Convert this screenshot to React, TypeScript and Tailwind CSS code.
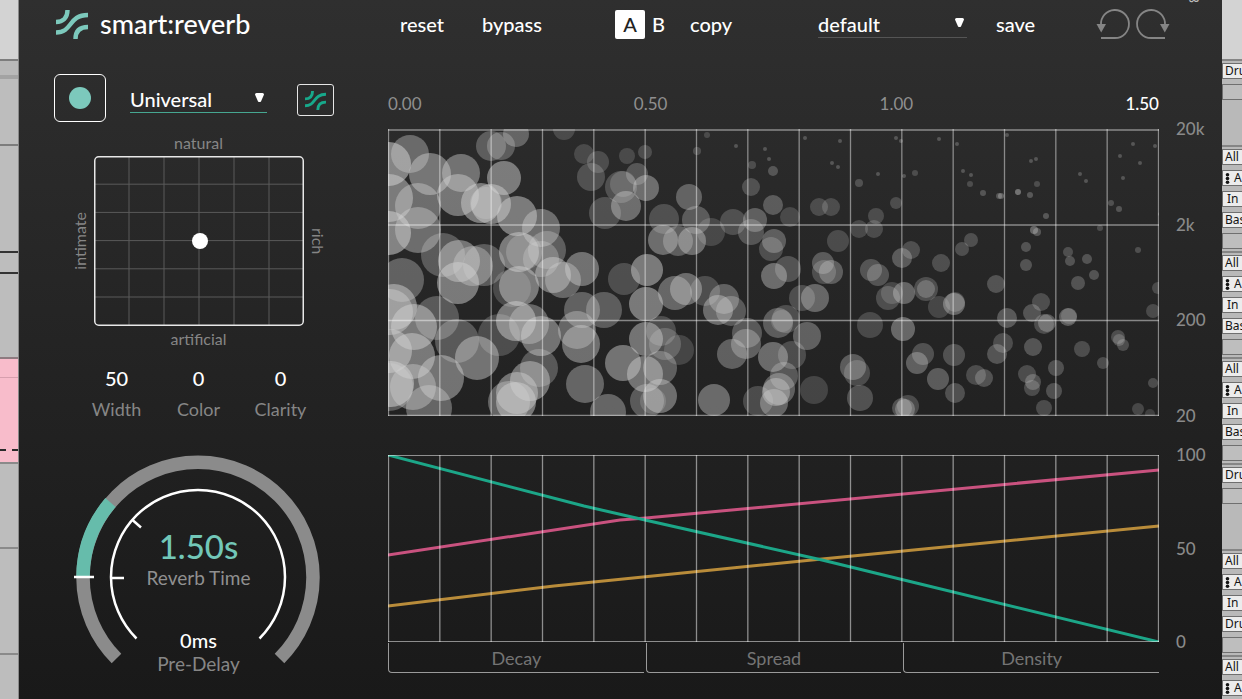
import { ReactNode, useState } from "react";

// x, y, radius, opacity in percent
const bubbles = [
  [0, 35, 22, 50], [21, 25, 19, 35], [41, 45, 21, 42], [72, 44, 19, 40], [0, 69, 24, 45],
  [29, 77, 23, 38], [0, 104, 22, 50], [29, 101, 23, 38], [69, 66, 21, 42], [102, 17, 15, 28],
  [112, 17, 14, 28], [127, 5, 13, 32], [115, 49, 17, 45], [92, 74, 20, 45], [97, 74, 16, 25],
  [102, 75, 20, 45], [128, 87, 20, 45], [152, 99, 19, 38], [130, 123, 20, 45], [135, 123, 18, 25],
  [158, 121, 19, 30], [152, 130, 18, 30], [54, 126, 22, 28], [70, 132, 21, 42], [95, 136, 21, 28],
  [84, 137, 20, 35], [69, 154, 21, 45], [164, 146, 18, 42], [174, 151, 18, 35], [193, 140, 17, 40],
  [13, 151, 22, 32], [130, 157, 20, 45], [123, 159, 19, 20], [235, 150, 16, 22], [258, 141, 16, 45],
  [193, 181, 18, 32], [215, 181, 18, 30], [257, 175, 17, 45], [5, 178, 23, 45], [1, 183, 23, 40],
  [25, 198, 23, 45], [48, 189, 22, 28], [68, 212, 22, 28], [110, 206, 21, 22], [127, 192, 20, 45],
  [140, 195, 20, 35], [152, 207, 20, 42], [188, 201, 19, 35], [192, 215, 19, 40], [1, 222, 22, 45],
  [23, 227, 23, 45], [88, 229, 22, 42], [234, 234, 18, 42], [257, 210, 17, 42], [256, 245, 18, 42],
  [52, 249, 23, 42], [24, 258, 23, 38], [2, 255, 23, 50], [0, 258, 24, 30], [40, 279, 23, 35],
  [150, 239, 19, 28], [141, 252, 20, 42], [128, 264, 21, 42], [127, 273, 20, 45], [120, 273, 21, 35],
  [196, 255, 19, 35], [219, 283, 18, 35], [258, 272, 17, 30], [175, 0, 11, 18], [195, 25, 10, 18],
  [209, 33, 11, 20], [202, 48, 14, 22], [238, 27, 8, 18], [232, 58, 16, 22], [234, 55, 13, 20],
  [248, 45, 11, 25], [237, 77, 15, 38], [216, 84, 16, 22], [257, 59, 13, 38], [256, 23, 7, 20],
  [300, 68, 13, 32], [308, 22, 4, 20], [318, 6, 3, 18], [347, 17, 2, 24], [376, 20, 2, 24],
  [380, 30, 2, 24], [363, 36, 4, 20], [384, 42, 5, 24], [362, 58, 9, 22], [384, 76, 10, 28],
  [275, 90, 15, 22], [307, 91, 14, 28], [322, 103, 14, 18], [344, 93, 13, 22], [366, 91, 12, 30],
  [362, 103, 13, 25], [401, 88, 10, 18], [274, 111, 15, 38], [289, 112, 15, 30], [303, 112, 14, 38],
  [385, 112, 12, 30], [382, 120, 12, 22], [399, 140, 13, 24], [385, 147, 13, 38], [430, 78, 9, 20],
  [442, 78, 9, 20], [449, 112, 11, 20], [434, 134, 11, 28], [435, 143, 12, 22], [442, 143, 12, 30],
  [482, 141, 11, 25], [489, 146, 11, 25], [470, 100, 9, 18], [485, 100, 9, 20], [487, 87, 8, 20],
  [470, 54, 4, 22], [507, 74, 6, 20], [286, 164, 17, 35], [297, 160, 16, 38], [316, 162, 15, 22],
  [335, 170, 15, 32], [329, 181, 15, 38], [342, 182, 15, 28], [413, 169, 13, 22], [426, 169, 14, 35],
  [389, 194, 15, 30], [393, 192, 11, 18], [397, 190, 14, 22], [358, 204, 15, 28], [418, 207, 14, 32],
  [357, 215, 15, 32], [343, 225, 15, 32], [384, 228, 15, 38], [403, 226, 14, 22], [395, 247, 14, 28],
  [390, 260, 16, 32], [387, 263, 14, 38], [385, 274, 14, 35], [369, 272, 15, 22], [425, 261, 14, 18],
  [325, 271, 16, 38], [464, 238, 13, 30], [468, 244, 13, 22], [471, 269, 13, 25], [481, 196, 13, 20],
  [499, 169, 12, 22], [290, 221, 15, 18], [272, 202, 15, 22], [276, 215, 16, 22], [271, 239, 17, 32],
  [271, 267, 17, 40], [264, 272, 13, 20], [416, 9, 2, 24], [451, 12, 2, 24], [443, 34, 2, 24],
  [449, 38, 2, 24], [489, 45, 2, 24], [507, 9, 2, 24], [512, 12, 2, 24], [550, 10, 2, 24],
  [568, 15, 2, 24], [618, 6, 2, 24], [515, 47, 2, 24], [526, 44, 3, 20], [574, 42, 2, 24],
  [582, 46, 2, 24], [581, 55, 3, 20], [594, 64, 3, 24], [610, 67, 3, 24], [612, 67, 3, 30],
  [642, 32, 2, 24], [647, 30, 2, 24], [648, 55, 3, 20], [629, 63, 3, 40], [641, 66, 3, 26],
  [657, 87, 3, 26], [691, 45, 2, 24], [697, 52, 2, 24], [731, 27, 2, 24], [744, 15, 2, 24],
  [766, 17, 2, 24], [751, 34, 2, 24], [734, 49, 2, 24], [722, 74, 3, 22], [730, 80, 3, 24],
  [771, 85, 2, 24], [711, 99, 3, 20], [645, 101, 4, 34], [648, 103, 4, 26], [582, 111, 7, 22],
  [573, 120, 7, 22], [522, 121, 9, 22], [513, 129, 10, 28], [552, 134, 9, 22], [637, 118, 5, 24],
  [637, 136, 6, 24], [679, 123, 5, 22], [681, 132, 5, 24], [698, 130, 5, 24], [705, 146, 5, 24],
  [689, 154, 7, 24], [749, 121, 3, 22], [607, 155, 9, 24], [769, 159, 6, 20], [764, 182, 7, 20],
  [515, 164, 11, 34], [503, 164, 11, 18], [537, 160, 12, 22], [537, 160, 9, 25], [550, 178, 11, 18],
  [565, 175, 11, 34], [566, 173, 10, 22], [618, 189, 10, 28], [652, 173, 9, 22], [643, 184, 9, 25],
  [655, 195, 10, 22], [658, 194, 9, 28], [679, 188, 9, 30], [680, 187, 8, 18], [514, 200, 12, 36],
  [614, 214, 10, 22], [608, 225, 10, 26], [644, 218, 9, 26], [565, 226, 11, 24], [534, 225, 11, 24],
  [528, 234, 11, 32], [549, 250, 11, 30], [587, 246, 10, 22], [595, 249, 9, 25], [566, 264, 10, 24],
  [638, 245, 9, 22], [644, 253, 8, 25], [643, 259, 8, 22], [665, 262, 8, 24], [667, 239, 8, 24],
  [655, 279, 8, 22], [693, 220, 8, 22], [714, 234, 6, 22], [729, 208, 7, 22], [730, 211, 6, 22],
  [734, 216, 6, 22], [764, 254, 5, 22], [749, 280, 6, 20], [761, 285, 5, 16], [516, 280, 10, 30],
  [519, 277, 11, 22], [513, 279, 10, 25],
];

const columns = Array.from({ length: 16 }, (_, i) => 0.5 + (i * 770) / 15);

const curves = [
  { color: "#c9527f", points: "0,100 232,65 258,63 771,15" },
  { color: "#b98c3a", points: "0,151 166,131 434,104 771,71" },
  { color: "#1ca688", points: "0,0 196,51 257,65 434,105 520,126 771,187" },
];

const tracks = [
  { height: "h-[86px]", cells: ["Dru", ""] },
  { height: "h-[106px]", cells: ["All", "A", "In", "Bas", ""] },
  { height: "h-[106px]", cells: ["All", "A", "In", "Bas", ""] },
  { height: "h-[106px]", cells: ["All", "A", "In", "Bas", ""] },
  { height: "h-[86px]", cells: ["Dru", ""] },
  { height: "h-[106px]", cells: ["All", "A", "In", "Dru", ""] },
  { height: "h-[106px]", cells: ["All", "A", "In", "Bas", ""] },
];

function Waves({ className }: { className: string }) {
  return (
    <svg viewBox="0 0 32 29" fill="none" stroke="currentColor" strokeWidth="4.4" className={className}>
      <path d="M0 12C7 12 11.5 8 11.5 0" />
      <path d="M0 22.5C17 22.5 12 5 32 5" />
      <path d="M19.5 29C19.5 21 24 17 32 17" />
    </svg>
  );
}

function Turn({ className }: { className?: string }) {
  return (
    <svg viewBox="0 0 36 32" className={`h-8 w-9 ${className ?? ""}`}>
      <path d="M5 17A14 14 0 1 1 19 30H5" fill="none" stroke="#858585" strokeWidth="1.8" />
      <path d="M0.5 16H10L5.2 24.5Z" fill="#858585" />
    </svg>
  );
}

function Picker({ label, value, className }: { label: string; value: string; className: string }) {
  return (
    <div className={`relative border-b ${className}`}>
      <select
        aria-label={label}
        defaultValue={value}
        className="block h-[27px] w-full appearance-none bg-transparent text-[20px] leading-6 outline-none"
      >
        <option>{value}</option>
      </select>
      <svg viewBox="0 0 9 9" className="pointer-events-none absolute top-2 right-[3px] size-[9px]">
        <path d="M0 1.5Q0 0 1.5 0H7.5Q9 0 9 1.5L6 8.5Q4.5 9.5 3 8.5Z" fill="#fff" />
      </svg>
    </div>
  );
}

function Axis({ labels }: { labels: string[] }) {
  return (
    <div className="-my-2.5 ml-[17px] flex w-[46px] flex-col justify-between text-[17px] leading-5 font-medium text-[#8a8a8a]">
      {labels.map(label => <span key={label}>{label}</span>)}
    </div>
  );
}

function Param({ label, children }: { label: string; children: ReactNode }) {
  return (
    <div className="flex w-[82px] flex-col items-center gap-[7px] leading-6">
      <span className="text-[20px] font-medium">{children}</span>
      <span className="text-[18px] text-[#868686]">{label}</span>
    </div>
  );
}

function Arrangement() {
  return (
    <aside className="flex w-[19px] shrink-0 flex-col border-r border-[#8a8a8a] bg-[#bdbdbd]">
      <div className="h-[59px] bg-[#d3d3d3]" />
      <div className="h-[16px] border-t-2 border-[#7d7d7d] bg-[#b9b9b9]" />
      <div className="h-[69px] border-t-4 border-[#a3a3a3]" />
      <div className="h-[107px] border-t-2 border-[#7d7d7d]" />
      <div className="h-[21px] border-t-2 border-[#333]" />
      <div className="h-[85px] border-t-2 border-[#333]" />
      <div className="h-[20px] border-t-2 border-[#8d7b80] bg-[#f8bccb]" />
      <div className="h-[85px] border-t border-[#d79fae] bg-[#f8bccb] pt-[71px]">
        <div className="border-t-2 border-dashed border-[#2a2a2a]" />
      </div>
      <div className="h-[85px] border-t-2 border-[#8a8a8a]" />
      <div className="h-[106px] border-t-2 border-[#8a8a8a]" />
      <div className="flex-1 border-t-2 border-[#8a8a8a]" />
    </aside>
  );
}

function TrackList() {
  return (
    <aside className="w-5 shrink-0 overflow-hidden bg-[#b9b9b9] font-['Noto_Sans',sans-serif] text-[12px] leading-[14px] text-[#141414]">
      <div className="h-[59px] bg-[#d3d3d3]" />
      {tracks.map((track, i) => (
        <div key={i} className={`flex flex-col gap-[5px] border-t-2 border-[#858585] pt-0.5 ${track.height}`}>
          {track.cells.map((cell, j) => (
            <div
              key={j}
              className={`flex h-4 w-12 shrink-0 items-center border border-[#6f6f6f] ${cell ? "bg-[#ececec]" : "bg-[#bebebe]"} ${cell === "In" ? "pl-1" : "pl-0.5"}`}
            >
              {cell === "A" && (
                <svg viewBox="0 0 5 11" className="mr-1 h-[11px] w-[5px]">
                  <g fill="#141414">
                    <circle cx="2.5" cy="1.8" r="1.8" />
                    <circle cx="2.5" cy="5.5" r="1.8" />
                    <circle cx="2.5" cy="9.2" r="1.8" />
                  </g>
                </svg>
              )}
              {cell}
            </div>
          ))}
        </div>
      ))}
    </aside>
  );
}

function Header() {
  const [slot, setSlot] = useState("A");

  return (
    <header className="flex h-12 items-center gap-2.5 text-[20px] leading-6 font-medium">
      <div className="flex w-[359px] shrink-0 items-center gap-3 pl-[37px]">
        <Waves className="h-[29px] w-8 text-[#7cc9bc]" />
        <h1 className="text-[27px] leading-8">smart:reverb</h1>
      </div>
      <div className="flex flex-1 items-center pl-3">
        <button className="w-[82px] text-left">reset</button>
        <button className="w-[133px] text-left">bypass</button>
        {["A", "B"].map(name => (
          <button
            key={name}
            onClick={() => setSlot(name)}
            className={`h-[29px] rounded-[2px] ${slot === name ? "w-[30px] bg-white text-[#222]" : "w-[27px]"}`}
          >
            {name}
          </button>
        ))}
        <button className="ml-[18px] w-[128px] text-left">copy</button>
        <Picker label="Preset" value="default" className="w-[149px] border-b-[#555555]" />
        <button className="ml-[29px] w-[100px] text-left">save</button>
        <button aria-label="Undo"><Turn /></button>
        <button aria-label="Redo" className="ml-0.5"><Turn className="-scale-x-100" /></button>
      </div>
    </header>
  );
}

function Pad() {
  return (
    <div className="flex flex-col items-center text-[16px] leading-5 text-[#868686]">
      <span>natural</span>
      <div className="my-[3px] flex items-center">
        <span className="w-6 rotate-180 [writing-mode:vertical-rl]">intimate</span>
        <svg viewBox="0 0 210 170" className="h-[170px] w-[210px]">
          <g stroke="#5a5a5a" strokeWidth="1">
            {[1, 2, 3, 4, 5].map(i => <path key={i} d={`M${i * 35} 1V169M1 ${i * 28.2}H209`} />)}
          </g>
          <rect x="0.75" y="0.75" width="208.5" height="168.5" rx="4" fill="none" stroke="#e8e8e8" strokeWidth="1.5" />
          <circle cx="106" cy="85" r="8" fill="#fff" />
        </svg>
        <span className="w-6 [writing-mode:vertical-rl]">rich</span>
      </div>
      <span>artificial</span>
    </div>
  );
}

function Dial() {
  return (
    <div className="relative mt-[31px] h-[226px] w-[250px]">
      <svg viewBox="0 0 250 226" fill="none" className="h-full w-full">
        <path d="M42.5 206.5A115 115 0 1 1 205.5 206.5" stroke="#8b8b8b" strokeWidth="13.5" />
        <path d="M9 125A115 115 0 0 1 36.5 50.5" stroke="#66bcab" strokeWidth="13.5" />
        <path d="M62.5 186.5A87 87 0 1 1 185.5 186.5" stroke="#fff" strokeWidth="2.5" />
        <path d="M0 125H20M37 126H50M58.5 68L67 75.5" stroke="#fff" strokeWidth="2.5" />
      </svg>
      <div className="absolute inset-0 flex flex-col items-center pt-[74px] leading-6">
        <span className="text-[33px] leading-10 font-medium text-[#72c7b8]">1.50s</span>
        <span className="text-[19px] text-[#909090]">Reverb Time</span>
        <span className="mt-[38px] text-[20px] font-medium">0ms</span>
        <span className="text-[19px] text-[#868686]">Pre-Delay</span>
      </div>
    </div>
  );
}

function Controls() {
  return (
    <section className="flex w-[359px] shrink-0 flex-col items-center">
      <div className="mb-[11px] flex w-full items-center pl-[35px]">
        <button
          aria-label="Learn"
          className="flex h-12 w-[52px] items-center justify-center rounded-md border border-white"
        >
          <span className="size-[22px] rounded-full bg-[#7cc9bc]" />
        </button>
        <Picker label="Profile" value="Universal" className="mt-0.5 ml-6 w-[137px] border-b-[#46a791] font-medium" />
        <button
          aria-label="Smart mode"
          className="mt-1 ml-[30px] flex h-8 w-[37px] items-center justify-center rounded-[3px] border border-[#e6e6e6]"
        >
          <Waves className="h-[19px] w-[21px] text-[#17a98b]" />
        </button>
      </div>
      <Pad />
      <div className="mt-[17px] flex">
        <Param label="Width">50</Param>
        <Param label="Color">0</Param>
        <Param label="Clarity">0</Param>
      </div>
      <Dial />
    </section>
  );
}

function Charts() {
  return (
    <section className="min-w-0 flex-1 pt-5">
      <div className="mr-[63px] flex justify-between text-[17px] leading-5 text-[#8f8f8f]">
        <span>0.00</span>
        <span>0.50</span>
        <span>1.00</span>
        <span className="font-medium text-white">1.50</span>
      </div>

      <div className="mt-[15px] flex">
        <svg viewBox="0 0 771 287" className="h-auto min-w-0 flex-1">
          <g fill="#d2d2d2" transform="translate(1 0)">
            {bubbles.map(([x, y, r, opacity], i) => (
              <circle key={i} cx={x} cy={y} r={r} fillOpacity={opacity / 92} />
            ))}
          </g>
          <g stroke="#fff" strokeOpacity="0.45">
            {columns.map(x => <path key={x} d={`M${x} 0V287`} strokeWidth="1.3" />)}
            {[1, 96, 191.5, 286.5].map(y => <path key={y} d={`M0 ${y}H771`} strokeWidth="1.3" />)}
          </g>
        </svg>
        <Axis labels={["20k", "2k", "200", "20"]} />
      </div>

      <div className="mt-[39px] flex">
        <svg viewBox="0 0 771 187" className="h-auto min-w-0 flex-1">
          <g fill="none" strokeWidth="3">
            {curves.map(curve => <polyline key={curve.color} points={curve.points} stroke={curve.color} />)}
          </g>
          <g stroke="#fff" strokeOpacity="0.5">
            {columns.map(x => <path key={x} d={`M${x} 0V187`} strokeWidth="1.3" />)}
            <path d="M0 0.5H771M0 186.5H771" />
          </g>
        </svg>
        <Axis labels={["100", "50", "0"]} />
      </div>

      <div className="mt-px mr-[63px] grid grid-cols-3 gap-0.5 text-[18px] leading-[30px] text-[#747474]">
        {["Decay", "Spread", "Density"].map(name => (
          <button key={name} className="h-[30px] rounded-bl-[4px] border-b border-l border-[#9a9a9a]">
            {name}
          </button>
        ))}
      </div>
    </section>
  );
}

export default function App() {
  return (
    <div className="flex h-screen overflow-hidden">
      <Arrangement />
      <main className="relative min-w-0 flex-1 overflow-hidden bg-linear-to-b from-[#2f2f2f] to-[#191919] font-['Lato',sans-serif] text-white">
        <Header />
        <div className="flex gap-2.5 pt-[26px]">
          <Controls />
          <Charts />
        </div>
        <span className="absolute -top-1.5 right-[18px] text-[14px] leading-5 text-[#bbb] [writing-mode:vertical-rl]">B</span>
      </main>
      <TrackList />
    </div>
  );
}
